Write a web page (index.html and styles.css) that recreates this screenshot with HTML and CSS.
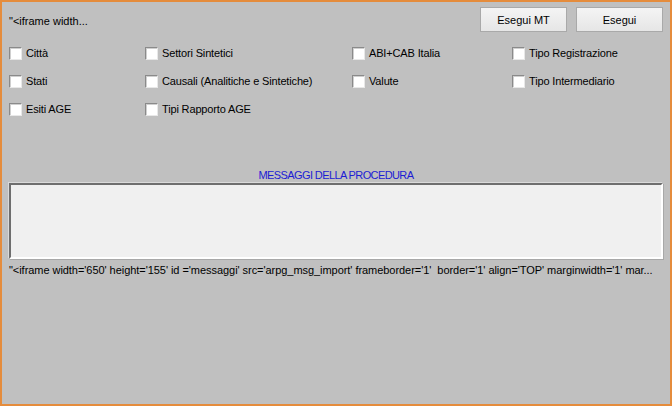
FILE: index.html
```html
<!DOCTYPE html>
<html>
<head>
<meta charset="utf-8">
<link rel="stylesheet" href="styles.css">
</head>
<body>
<div class="window">
  <div class="top">
    <span class="stub">"&lt;iframe width...</span>
    <div class="buttons">
      <button class="btn">Esegui MT</button>
      <button class="btn">Esegui</button>
    </div>
  </div>
  <div class="checks">
    <label class="chk"><span class="box"></span>Città</label>
    <label class="chk"><span class="box"></span>Settori Sintetici</label>
    <label class="chk"><span class="box"></span>ABI+CAB Italia</label>
    <label class="chk"><span class="box"></span>Tipo Registrazione</label>
    <label class="chk"><span class="box"></span>Stati</label>
    <label class="chk"><span class="box"></span>Causali (Analitiche e Sintetiche)</label>
    <label class="chk"><span class="box"></span>Valute</label>
    <label class="chk"><span class="box"></span>Tipo Intermediario</label>
    <label class="chk"><span class="box"></span>Esiti AGE</label>
    <label class="chk"><span class="box"></span>Tipi Rapporto AGE</label>
  </div>
  <div class="msg-title">MESSAGGI DELLA PROCEDURA</div>
  <div class="frame"></div>
  <div class="code">"&lt;iframe width='650' height='155' id ='messaggi' src='arpg_msg_import' frameborder='1'&nbsp; border='1' align='TOP' marginwidth='1' mar...</div>
</div>
</body>
</html>
```
FILE: styles.css
```css
* { box-sizing: border-box; }
html, body { margin: 0; padding: 0; height: 100%; }
body {
  font-family: "Liberation Sans", Arial, sans-serif;
  font-size: 11px;
  color: #000;
  background: #c0c0c0;
}
.window {
  height: 406px;
  width: 672px;
  border: 2px solid #e58c3c;
  background: #c0c0c0;
  padding: 5px 7px 0 7px;
}
.top {
  display: flex;
  justify-content: space-between;
  align-items: center;
  height: 25px;
}
.stub { padding-top: 2px; }
.buttons { display: flex; gap: 9px; }
.btn {
  width: 87px;
  height: 25px;
  font: inherit;
  color: #000;
  background: linear-gradient(#f4f4f4, #e6e6e6);
  border: 1px solid #a9a9a9;
  border-radius: 0;
  padding: 0;
}
.checks {
  display: grid;
  grid-template-columns: 136px 207px 160px auto;
  grid-auto-rows: 28px;
  margin-top: 7px;
}
.chk {
  display: flex;
  align-items: center;
  gap: 4px;
  letter-spacing: -0.15px;
}
.box {
  width: 13px;
  height: 13px;
  background: #fff;
  border: 1px solid;
  border-color: #8a8a8a #e8e8e8 #e8e8e8 #8a8a8a;
  box-shadow: inset 1px 1px 0 #cfcfcf;
}
.msg-title {
  text-align: center;
  color: #1c1cd4;
  margin-top: 45px;
  height: 14px;
  line-height: 14px;
  letter-spacing: -0.6px;
}
.frame {
  height: 76px;
  margin-top: 1px;
  background: #f0f0f0;
  border: 2px solid;
  border-color: #6e6e6e #ffffff #ffffff #6e6e6e;
  box-shadow: -1px -1px 0 #dadada, 1px 1px 0 #a8a8a8;
}
.code {
  margin-top: 5px;
  white-space: nowrap;
  letter-spacing: -0.05px;
}
```
